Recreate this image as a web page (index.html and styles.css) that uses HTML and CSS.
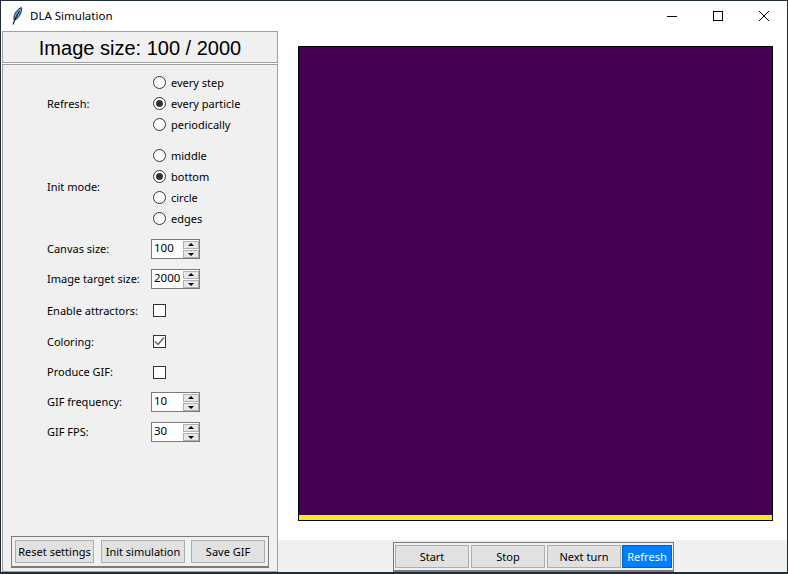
FILE: index.html
```html
<!DOCTYPE html>
<html lang="en">
<head>
    <meta charset="UTF-8">
    <title>DLA Simulation</title>
    <link rel="stylesheet" href="styles.css">
</head>
<body>
    <div id="window">
        <!-- Title bar -->
        <div class="titlebar">
            <svg class="app-icon" width="16" height="20" viewBox="0 0 16 20">
                <path d="M12.5 1.5C8.5 3 5.5 7 5 11c-.2 1.5 0 2.5.5 3 2.500-.5 5-3.500 6.300-7 .6-2 1.200-4 .7-5.500z" fill="#6f9fd8" stroke="#1a2a3a" stroke-width="1"/>
                <path d="M10.500 5C8.500 8 6.500 12 4 18.500" fill="none" stroke="#10151c" stroke-width="1.200"/>
            </svg>
            <span class="title">DLA Simulation</span>
            <div class="win-buttons">
                <svg width="12" height="12" viewBox="0 0 12 12"><path d="M1 6.500H11" stroke="#000" fill="none"/></svg>
                <svg width="12" height="12" viewBox="0 0 12 12"><rect x="1.500" y="1.500" width="9" height="9" stroke="#000" fill="none"/></svg>
                <svg width="12" height="12" viewBox="0 0 12 12"><path d="M1 1L11 11M11 1L1 11" stroke="#000" fill="none"/></svg>
            </div>
        </div>

        <div class="content">
            <!-- Left panel -->
            <div class="sidebar">
                <div class="image-size">Image size: 100 / 2000</div>
                <div class="settings">
                    <div class="row row-refresh">
                        <span class="row-label">Refresh:</span>
                        <div class="radio-group">
                            <div class="radio"><span class="radio-dot"></span>every step</div>
                            <div class="radio"><span class="radio-dot selected"></span>every particle</div>
                            <div class="radio"><span class="radio-dot"></span>periodically</div>
                        </div>
                    </div>
                    <div class="row row-init">
                        <span class="row-label">Init mode:</span>
                        <div class="radio-group">
                            <div class="radio"><span class="radio-dot"></span>middle</div>
                            <div class="radio"><span class="radio-dot selected"></span>bottom</div>
                            <div class="radio"><span class="radio-dot"></span>circle</div>
                            <div class="radio"><span class="radio-dot"></span>edges</div>
                        </div>
                    </div>
                    <div class="row row-spin">
                        <span class="row-label">Canvas size:</span>
                        <div class="spinbox"><span class="spin-value">100</span><div class="spin-arrows"><span class="spin-up"></span><span class="spin-down"></span></div></div>
                    </div>
                    <div class="row row-spin row-last-spin">
                        <span class="row-label">Image target size:</span>
                        <div class="spinbox"><span class="spin-value">2000</span><div class="spin-arrows"><span class="spin-up"></span><span class="spin-down"></span></div></div>
                    </div>
                    <div class="row">
                        <span class="row-label">Enable attractors:</span>
                        <span class="checkbox"></span>
                    </div>
                    <div class="row">
                        <span class="row-label">Coloring:</span>
                        <span class="checkbox">
                            <svg width="11" height="11" viewBox="0 0 11 11"><path d="M1 5.500L4 8.500L10 1.500" fill="none" stroke="#555" stroke-width="1.200"/></svg>
                        </span>
                    </div>
                    <div class="row row-spin">
                        <span class="row-label">Produce GIF:</span>
                        <span class="checkbox"></span>
                    </div>
                    <div class="row row-spin">
                        <span class="row-label">GIF frequency:</span>
                        <div class="spinbox"><span class="spin-value">10</span><div class="spin-arrows"><span class="spin-up"></span><span class="spin-down"></span></div></div>
                    </div>
                    <div class="row row-spin">
                        <span class="row-label">GIF FPS:</span>
                        <div class="spinbox"><span class="spin-value">30</span><div class="spin-arrows"><span class="spin-up"></span><span class="spin-down"></span></div></div>
                    </div>

                    <div class="settings-actions">
                        <button class="btn btn-reset">Reset settings</button>
                        <button class="btn btn-init">Init simulation</button>
                        <button class="btn btn-save">Save GIF</button>
                    </div>
                </div>
            </div>

            <!-- Canvas and controls -->
            <div class="main">
                <div class="canvas-area">
                    <div class="canvas"><div class="canvas-bottom"></div></div>
                </div>
                <div class="controls-bar">
                    <div class="controls">
                        <button class="btn btn-control">Start</button>
                        <button class="btn btn-control">Stop</button>
                        <button class="btn btn-control">Next turn</button>
                        <button class="btn btn-refresh">Refresh</button>
                    </div>
                </div>
            </div>
        </div>
    </div>
</body>
</html>
```

FILE: styles.css
```css
html, body {
    margin: 0;
    padding: 0;
    height: 100%;
    overflow: hidden;
}

body {
    font-family: 'Noto Sans', sans-serif;
    font-size: 11px;
    color: #000;
}

#window {
    width: 788px;
    height: 574px;
    box-sizing: border-box;
    border: 1px solid #1f2d3a;
    border-width: 1px 1px 2px 1px;
    background: #fff;
    display: flex;
    flex-direction: column;
}

.titlebar {
    height: 30px;
    flex: none;
    display: flex;
    align-items: center;
    padding-left: 8px;
}

.app-icon {
    margin-right: 5px;
}

.title {
    font-size: 11.5px;
    margin-bottom: 2px;
}

.win-buttons {
    margin-left: auto;
    display: flex;
    gap: 34px;
    padding-right: 17px;
}

.content {
    flex: 1;
    display: flex;
    min-height: 0;
}

.sidebar {
    width: 276px;
    margin-left: 1px;
    display: flex;
    flex-direction: column;
    gap: 1px;
    flex: none;
}

.image-size {
    height: 30px;
    line-height: 32px;
    border: 1px solid #a0a0a0;
    background: #f0f0f0;
    text-align: center;
    font-family: 'Liberation Sans', sans-serif;
    font-size: 20px;
}

.settings {
    flex: 1;
    border: 1px solid #a0a0a0;
    background: #f0f0f0;
    padding: 7px 0 3px 0;
    display: flex;
    flex-direction: column;
}

.row {
    height: 31px;
    display: flex;
    align-items: center;
    padding-left: 44px;
    flex: none;
}

.row-label {
    width: 104px;
    flex: none;
    margin-bottom: 1px;
}

.row-refresh {
    height: 63px;
}

.row-init {
    height: 84px;
    margin-top: 10px;
    margin-bottom: 5px;
}

.row-init .row-label {
    margin-bottom: 2px;
}

.row-spin {
    height: 30px;
}

.row-last-spin {
    margin-bottom: 1px;
}

.radio-group {
    display: flex;
    flex-direction: column;
}

.radio {
    height: 21px;
    display: flex;
    align-items: center;
}

.radio-dot {
    width: 11px;
    height: 11px;
    border: 1px solid #333;
    border-radius: 50%;
    background: #fff;
    margin-left: 2px;
    margin-right: 5px;
    position: relative;
}

.radio-dot.selected::after {
    content: "";
    position: absolute;
    left: 2px;
    top: 2px;
    width: 7px;
    height: 7px;
    border-radius: 50%;
    background: #333;
}

.checkbox {
    width: 11px;
    height: 11px;
    border: 1px solid #333;
    background: #fff;
    margin-left: 2px;
    display: flex;
}

.spinbox {
    width: 47px;
    height: 18px;
    border: 1px solid #7a7a7a;
    background: #fff;
    display: flex;
}

.spin-value {
    flex: 1;
    padding-left: 2px;
    line-height: 15px;
    font-size: 11.5px;
}

.spin-arrows {
    width: 15px;
    margin: 0 1px 0 0;
    display: flex;
    flex-direction: column;
    justify-content: center;
    gap: 1px;
}

.spin-up, .spin-down {
    height: 6px;
    width: 14px;
    border: 1px solid #b0b0b0;
    box-sizing: content-box;
    background: #e6e6e6;
    position: relative;
}

.spin-up::after, .spin-down::after {
    content: "";
    position: absolute;
    left: 4px;
    border-left: 3px solid transparent;
    border-right: 3px solid transparent;
}

.spin-up::after {
    top: 1px;
    border-bottom: 3px solid #000;
}

.spin-down::after {
    top: 2px;
    border-top: 3px solid #000;
}

.settings-actions {
    margin-top: auto;
    margin-left: 8px;
    width: 250px;
    height: 23px;
    padding: 3px;
    border: 1px solid #7a7a7a;
    border-bottom-width: 2px;
    display: flex;
}

.btn {
    font-family: inherit;
    font-size: 11px;
    color: #000;
    background: #e1e1e1;
    border: 1px solid #adadad;
    padding: 0;
    height: 23px;
    box-sizing: border-box;
    white-space: nowrap;
}

.btn-reset {
    width: 79px;
    margin-right: 7px;
}

.btn-init {
    width: 84px;
    margin-right: 6px;
}

.btn-save {
    width: 74px;
}

.main {
    flex: 1;
    display: flex;
    flex-direction: column;
    min-width: 0;
}

.canvas-area {
    height: 509px;
    flex: none;
    padding: 15px 0 0 20px;
    box-sizing: border-box;
}

.canvas {
    width: 473px;
    height: 473px;
    border: 1px solid #000;
    background: #440154;
    display: flex;
    flex-direction: column;
    justify-content: flex-end;
}

.canvas-bottom {
    height: 5px;
    background: #fde725;
}

.controls-bar {
    flex: 1;
    background: #f0f0f0;
    display: flex;
    justify-content: center;
    padding: 2px 0 0 2px;
}

.controls {
    height: 23px;
    padding: 2px 1px 2px 1px;
    border: 1px solid #7a7a7a;
    border-bottom-width: 2px;
    display: flex;
    gap: 2px;
}

.btn-control {
    width: 74px;
}

.btn-refresh {
    width: 50px;
    margin-left: -1px;
    background: #007fff;
    border-color: #0060c0;
    color: #fff;
}
```
